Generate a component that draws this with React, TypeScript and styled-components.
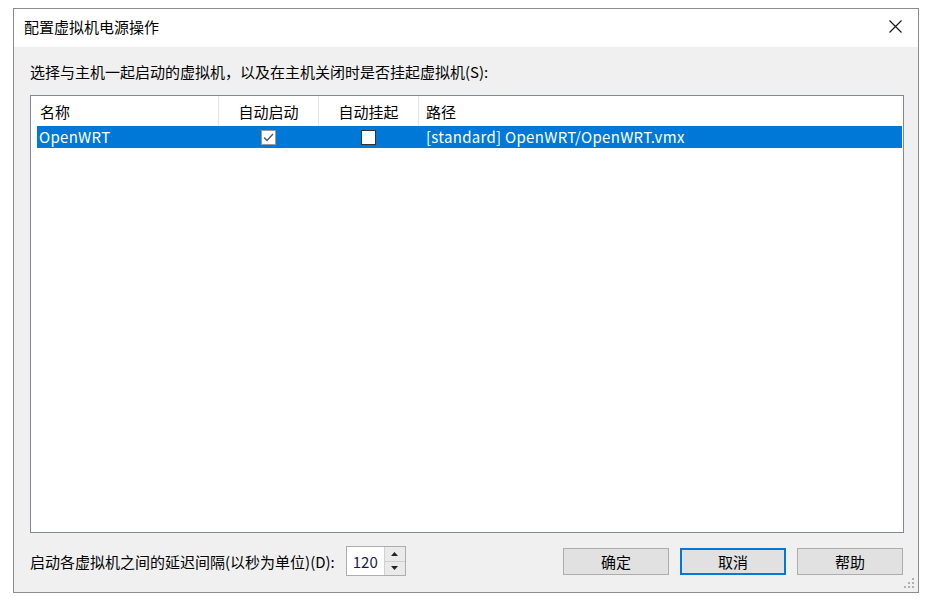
import React from 'react';
import styled, { createGlobalStyle } from 'styled-components';

const GlobalStyle = createGlobalStyle`
  html, body {
    margin: 0;
    padding: 0;
    background: #ffffff;
  }

  body {
    font-family: "Noto Sans CJK SC", "Liberation Sans", sans-serif;
    font-size: 15px;
    color: #000000;
  }
`;

const Page = styled.div`
  width: 934px;
  height: 599px;
  padding: 8px 0 0 13px;
  box-sizing: border-box;
`;

const Window = styled.div`
  width: 906px;
  height: 585px;
  box-sizing: border-box;
  border: 1px solid #8c8c8c;
  background: #f0f0f0;
  display: flex;
  flex-direction: column;
  position: relative;
`;

const TitleBar = styled.div`
  height: 38px;
  flex: none;
  background: #ffffff;
  display: flex;
  align-items: center;
  justify-content: space-between;
  padding: 0 10px 0 10px;
`;

const Title = styled.span`
  font-size: 15px;
  line-height: 20px;
  margin-top: -2px;
`;

const CloseButton = styled.button`
  width: 26px;
  height: 26px;
  border: none;
  background: transparent;
  padding: 0;
  display: flex;
  align-items: center;
  justify-content: center;
  margin-top: -4px;
`;

const Body = styled.div`
  flex: 1;
  display: flex;
  flex-direction: column;
  padding: 14px 14px 14px 16px;
  min-height: 0;
`;

const Prompt = styled.div`
  line-height: 22px;
  margin-bottom: 12px;
`;

const ListView = styled.div`
  height: 438px;
  box-sizing: border-box;
  border: 1px solid #828790;
  background: #ffffff;
  display: flex;
  flex-direction: column;
`;

const HeaderRow = styled.div`
  display: grid;
  grid-template-columns: 188px 100px 100px 1fr;
  height: 30px;
`;

const HeaderCell = styled.div<{ $center?: boolean; $pad: number }>`
  display: flex;
  align-items: center;
  justify-content: ${({ $center }) => ($center ? 'center' : 'flex-start')};
  padding-left: ${({ $pad }) => $pad}px;
  border-right: 1px solid #e5e5e5;
  padding-top: 1px;
  box-sizing: border-box;

  &:last-child {
    border-right: none;
  }
`;

const DataRow = styled.div<{ $selected?: boolean }>`
  display: grid;
  grid-template-columns: 181px 100px 100px 1fr;
  height: 22px;
  margin: 0 1px 0 6px;
  background: ${({ $selected }) => ($selected ? '#0078d7' : 'transparent')};
  color: ${({ $selected }) => ($selected ? '#ffffff' : '#000000')};
`;

const DataCell = styled.div<{ $center?: boolean; $pad: number }>`
  display: flex;
  align-items: center;
  justify-content: ${({ $center }) => ($center ? 'center' : 'flex-start')};
  padding-left: ${({ $pad }) => $pad}px;
  white-space: nowrap;
  line-height: 22px;
  letter-spacing: 0.3px;
`;

const CheckBox = styled.span<{ $checked?: boolean }>`
  width: 15px;
  height: 15px;
  box-sizing: border-box;
  border: 1px solid ${({ $checked }) => ($checked ? '#9a9a9a' : '#333333')};
  background: #ffffff;
  display: flex;
  align-items: center;
  justify-content: center;
`;

const Footer = styled.div`
  display: flex;
  align-items: center;
  margin-top: 13px;
  height: 30px;
`;

const DelayLabel = styled.span`
  margin-right: 11px;
`;

const SpinBox = styled.div`
  display: flex;
  height: 30px;
  box-sizing: border-box;
  border: 1px solid #adadad;
  background: #ffffff;
`;

const SpinValue = styled.div`
  width: 37px;
  display: flex;
  align-items: center;
  padding-left: 6px;
  box-sizing: border-box;
  color: #1b1b4b;
`;

const SpinButtons = styled.div`
  width: 20px;
  display: flex;
  flex-direction: column;
  border-left: 1px solid #d0d0d0;
`;

const SpinArrow = styled.div`
  flex: 1;
  background: #eaeaea;
  display: flex;
  align-items: center;
  justify-content: center;

  & + & {
    border-top: 1px solid #cfcfcf;
  }
`;

const ButtonGroup = styled.div`
  margin-left: auto;
  display: flex;
  gap: 11px;
  margin-right: 1px;
`;

const DialogButton = styled.button<{ $default?: boolean }>`
  width: 106px;
  height: 27px;
  box-sizing: border-box;
  background: #e1e1e1;
  border: ${({ $default }) => ($default ? '2px solid #0078d7' : '1px solid #adadad')};
  font-family: "Noto Sans CJK SC", "Liberation Sans", sans-serif;
  font-size: 15px;
  color: #000000;
  padding: 0;
  line-height: 1;
`;

const Grip = styled.svg`
  position: absolute;
  right: 3px;
  bottom: 3px;
`;

const App: React.FC = () => {
  return (
    <>
      <GlobalStyle />
      <Page>
        <Window>
          <TitleBar>
            <Title>配置虚拟机电源操作</Title>
            <CloseButton aria-label="close">
              <svg width="13" height="13" viewBox="0 0 13 13">
                <path d="M0.5 0.5 L12.5 12.5 M12.5 0.5 L0.5 12.5" stroke="#1a1a1a" strokeWidth="1.2" fill="none" />
              </svg>
            </CloseButton>
          </TitleBar>
          <Body>
            <Prompt>选择与主机一起启动的虚拟机，以及在主机关闭时是否挂起虚拟机(S):</Prompt>
            <ListView>
              <HeaderRow>
                <HeaderCell $pad={9}>名称</HeaderCell>
                <HeaderCell $pad={0} $center>自动启动</HeaderCell>
                <HeaderCell $pad={0} $center>自动挂起</HeaderCell>
                <HeaderCell $pad={7}>路径</HeaderCell>
              </HeaderRow>
              <DataRow $selected>
                <DataCell $pad={2}>OpenWRT</DataCell>
                <DataCell $pad={0} $center>
                  <CheckBox $checked>
                    <svg width="11" height="9" viewBox="0 0 11 9">
                      <path d="M1 4.5 L4 7.5 L10 1" stroke="#555555" strokeWidth="1.3" fill="none" />
                    </svg>
                  </CheckBox>
                </DataCell>
                <DataCell $pad={0} $center>
                  <CheckBox />
                </DataCell>
                <DataCell $pad={8}>[standard] OpenWRT/OpenWRT.vmx</DataCell>
              </DataRow>
            </ListView>
            <Footer>
              <DelayLabel>启动各虚拟机之间的延迟间隔(以秒为单位)(D):</DelayLabel>
              <SpinBox>
                <SpinValue>120</SpinValue>
                <SpinButtons>
                  <SpinArrow>
                    <svg width="7" height="4" viewBox="0 0 7 4"><path d="M0 4 L3.5 0 L7 4 Z" fill="#222" /></svg>
                  </SpinArrow>
                  <SpinArrow>
                    <svg width="7" height="4" viewBox="0 0 7 4"><path d="M0 0 L3.5 4 L7 0 Z" fill="#222" /></svg>
                  </SpinArrow>
                </SpinButtons>
              </SpinBox>
              <ButtonGroup>
                <DialogButton>确定</DialogButton>
                <DialogButton $default>取消</DialogButton>
                <DialogButton>帮助</DialogButton>
              </ButtonGroup>
            </Footer>
          </Body>
          <Grip width="11" height="11" viewBox="0 0 11 11">
            <rect x="8" y="0" width="2" height="2" fill="#b0b0b0" />
            <rect x="4" y="4" width="2" height="2" fill="#b0b0b0" />
            <rect x="8" y="4" width="2" height="2" fill="#b0b0b0" />
            <rect x="0" y="8" width="2" height="2" fill="#b0b0b0" />
            <rect x="4" y="8" width="2" height="2" fill="#b0b0b0" />
            <rect x="8" y="8" width="2" height="2" fill="#b0b0b0" />
          </Grip>
        </Window>
      </Page>
    </>
  );
};

export default App;
